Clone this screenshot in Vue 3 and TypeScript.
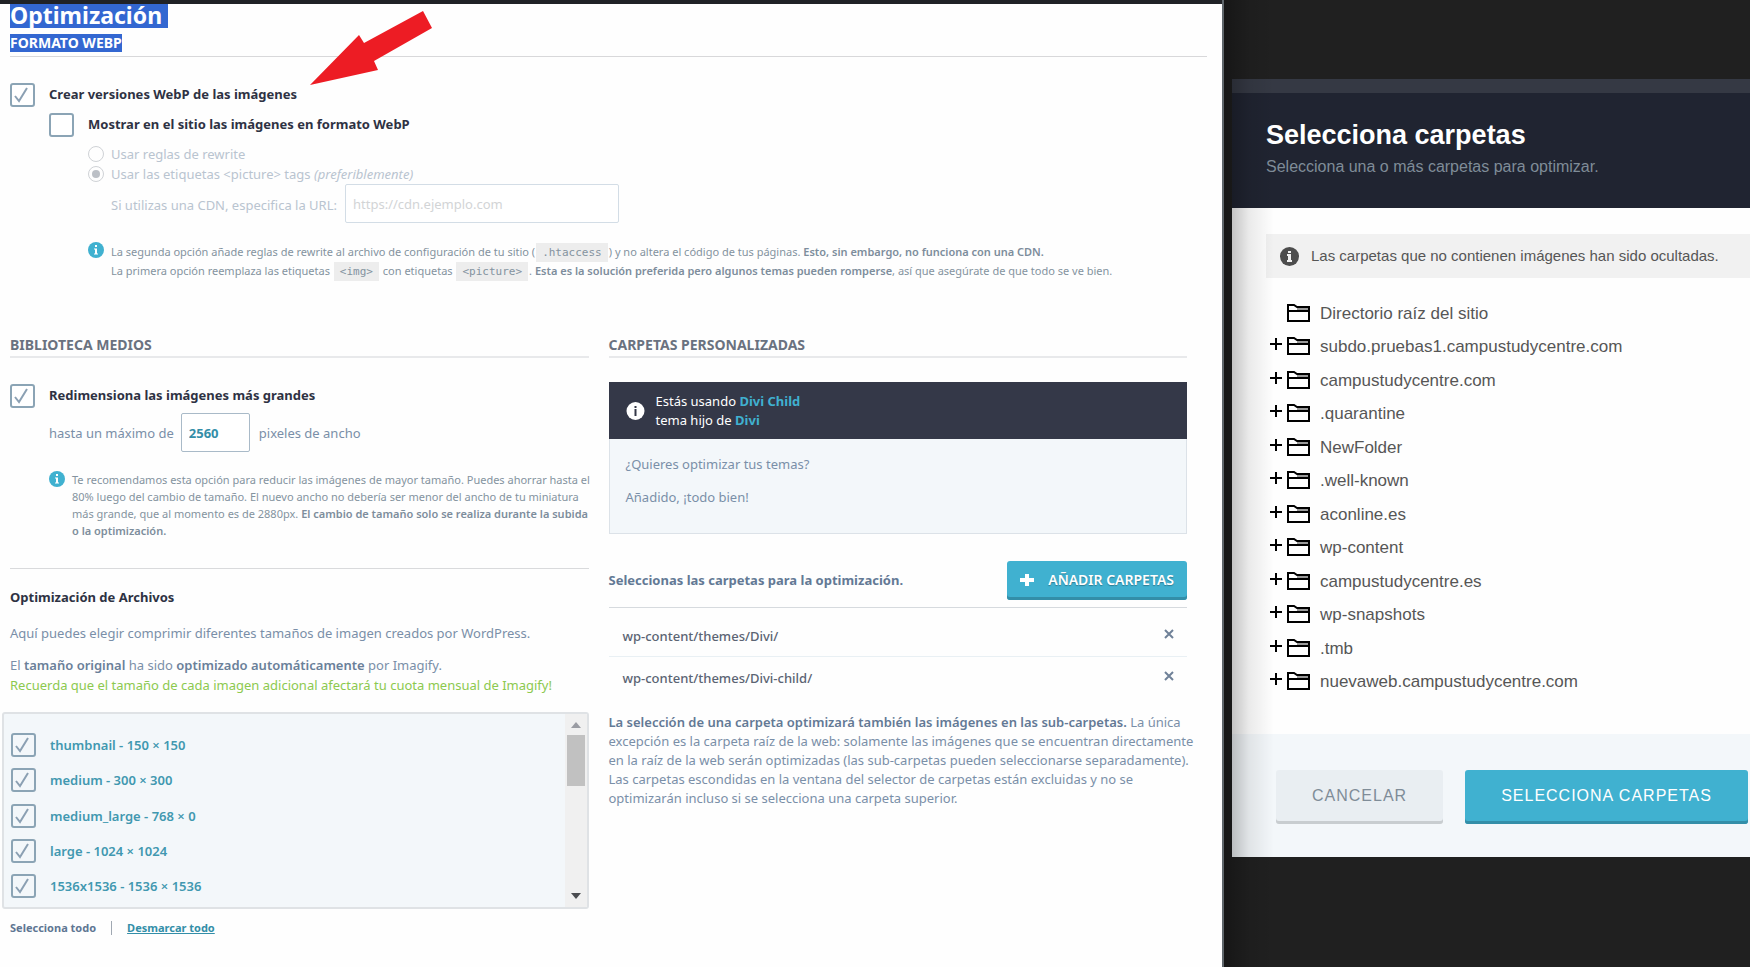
<script setup lang="ts">
import { ref } from 'vue'

interface ImageSize {
  id: string
  label: string
  checked: boolean
}

interface Folder {
  name: string
  expandable: boolean
}

const createWebp = ref(true)
const displayWebp = ref(false)
const method = ref('picture')
const cdnUrl = ref('')
const resize = ref(true)
const maxWidth = ref('2560')

const sizes = ref<ImageSize[]>([
  { id: 'thumbnail', label: 'thumbnail - 150 × 150', checked: true },
  { id: 'medium', label: 'medium - 300 × 300', checked: true },
  { id: 'medium_large', label: 'medium_large - 768 × 0', checked: true },
  { id: 'large', label: 'large - 1024 × 1024', checked: true },
  { id: '1536x1536', label: '1536x1536 - 1536 × 1536', checked: true },
])

const customFolders = ref<string[]>(['wp-content/themes/Divi/', 'wp-content/themes/Divi-child/'])

const folders: Folder[] = [
  { name: 'Directorio raíz del sitio', expandable: false },
  { name: 'subdo.pruebas1.campustudycentre.com', expandable: true },
  { name: 'campustudycentre.com', expandable: true },
  { name: '.quarantine', expandable: true },
  { name: 'NewFolder', expandable: true },
  { name: '.well-known', expandable: true },
  { name: 'aconline.es', expandable: true },
  { name: 'wp-content', expandable: true },
  { name: 'campustudycentre.es', expandable: true },
  { name: 'wp-snapshots', expandable: true },
  { name: '.tmb', expandable: true },
  { name: 'nuevaweb.campustudycentre.com', expandable: true },
]

function setAll(value: boolean) {
  sizes.value.forEach((s) => (s.checked = value))
}

function removeFolder(name: string) {
  customFolders.value = customFolders.value.filter((f) => f !== name)
}
</script>

<template>
  <div class="page">
    <main class="settings">
      <h1><span class="selected">Optimización&nbsp;</span></h1>
      <h2 class="webp-title"><span class="selected">FORMATO WEBP</span></h2>

      <svg class="arrow" viewBox="0 0 124 76" width="124" height="76" aria-hidden="true">
        <path d="M113 0 L122 17 L64 50 L68 59 L0 74 L49 24 L54 32 Z" fill="#ed1c24" />
      </svg>

      <section class="webp">
        <label class="check-row">
          <span class="box">
            <input v-model="createWebp" type="checkbox" />
            <svg viewBox="0 0 25 24"><path d="M5 13 L9 18 L17 5" /></svg>
          </span>
          <span class="strong">Crear versiones WebP de las imágenes</span>
        </label>
        <div class="nested">
          <label class="check-row">
            <span class="box">
              <input v-model="displayWebp" type="checkbox" />
              <svg viewBox="0 0 25 24"><path d="M5 13 L9 18 L17 5" /></svg>
            </span>
            <span class="strong">Mostrar en el sitio las imágenes en formato WebP</span>
          </label>
          <div class="options">
            <div class="radios">
              <label><input v-model="method" type="radio" value="rewrite" disabled /> <span>Usar reglas de rewrite</span></label>
              <label>
                <input v-model="method" type="radio" value="picture" disabled />
                <span>Usar las etiquetas &lt;picture&gt; tags <em>(preferiblemente)</em></span>
              </label>
            </div>
            <div class="cdn">
              <label for="cdn">Si utilizas una CDN, especifica la URL:</label>
              <input id="cdn" v-model="cdnUrl" type="text" placeholder="https://cdn.ejemplo.com" disabled />
            </div>
            <div class="info webp-info">
              <svg viewBox="0 0 16 16" width="16" height="16" aria-hidden="true">
                <circle cx="8" cy="8" r="8" fill="#40b1d0" />
                <path d="M7 3h2v2H7zM6 6.500h3v5h1v1H6v-1h1v-4H6z" fill="#fff" />
              </svg>
              <p>
                La segunda opción añade reglas de rewrite al archivo de configuración de tu sitio (<code>.htaccess</code>)
                y no altera el código de tus páginas. <b>Esto, sin embargo, no funciona con una CDN.</b><br />
                La primera opción reemplaza las etiquetas <code>&lt;img&gt;</code> con etiquetas <code>&lt;picture&gt;</code>.
                <b>Esta es la solución preferida pero algunos temas pueden romperse</b>, así que asegúrate de que todo se ve bien.
              </p>
            </div>
          </div>
        </div>
      </section>

      <div class="columns">
        <section class="library">
          <h2 class="section-title">BIBLIOTECA MEDIOS</h2>
          <label class="check-row">
            <span class="box">
              <input v-model="resize" type="checkbox" />
              <svg viewBox="0 0 25 24"><path d="M5 13 L9 18 L17 5" /></svg>
            </span>
            <span class="strong">Redimensiona las imágenes más grandes</span>
          </label>
          <div class="resize">
            <label for="max-width">hasta un máximo de</label>
            <input id="max-width" v-model="maxWidth" type="text" />
            <span>pixeles de ancho</span>
          </div>
          <div class="info resize-info">
            <svg viewBox="0 0 16 16" width="16" height="16" aria-hidden="true">
              <circle cx="8" cy="8" r="8" fill="#40b1d0" />
              <path d="M7 3h2v2H7zM6 6.500h3v5h1v1H6v-1h1v-4H6z" fill="#fff" />
            </svg>
            <p>
              Te recomendamos esta opción para reducir las imágenes de mayor tamaño. Puedes ahorrar hasta el<br />
              80% luego del cambio de tamaño. El nuevo ancho no debería ser menor del ancho de tu miniatura<br />
              más grande, que al momento es de 2880px. <b>El cambio de tamaño solo se realiza durante la subida<br />
              o la optimización.</b>
            </p>
          </div>

          <h3 class="files-title">Optimización de Archivos</h3>
          <p class="files-intro">Aquí puedes elegir comprimir diferentes tamaños de imagen creados por WordPress.</p>
          <p class="files-note">
            El <b>tamaño original</b> ha sido <b>optimizado automáticamente</b> por Imagify.<br />
            <span class="green">Recuerda que el tamaño de cada imagen adicional afectará tu cuota mensual de Imagify!</span>
          </p>

          <div class="sizes">
            <div class="sizes-list">
              <label v-for="size in sizes" :key="size.id" class="check-row">
                <span class="box">
                  <input v-model="size.checked" type="checkbox" />
                  <svg viewBox="0 0 25 24"><path d="M5 13 L9 18 L17 5" /></svg>
                </span>
                <span class="size-name">{{ size.label }}</span>
              </label>
            </div>
            <div class="scrollbar" aria-hidden="true">
              <svg viewBox="0 0 10 6" width="10" height="6"><path d="M0 6 L5 0 L10 6Z" fill="#9a9ca3" /></svg>
              <span class="thumb"></span>
              <svg class="down" viewBox="0 0 10 6" width="10" height="6"><path d="M0 0 L5 6 L10 0Z" fill="#4a4c50" /></svg>
            </div>
          </div>
          <div class="bulk">
            <button type="button" @click="setAll(true)">Selecciona todo</button>
            <span class="divider"></span>
            <button type="button" class="active" @click="setAll(false)">Desmarcar todo</button>
          </div>
        </section>

        <section class="custom">
          <h2 class="section-title">CARPETAS PERSONALIZADAS</h2>
          <div class="theme">
            <div class="theme-head">
              <svg viewBox="0 0 18 18" width="19" height="18" aria-hidden="true">
                <circle cx="9" cy="9" r="9" fill="#fff" />
                <path d="M8 4h2v2H8zM8 7h2v7H8z" fill="#343848" />
              </svg>
              <p>Estás usando <b>Divi Child</b><br />tema hijo de <b>Divi</b></p>
            </div>
            <div class="theme-body">
              <p>¿Quieres optimizar tus temas?</p>
              <p>Añadido, ¡todo bien!</p>
            </div>
          </div>

          <div class="add-row">
            <strong>Seleccionas las carpetas para la optimización.</strong>
            <button type="button" class="add">
              <svg viewBox="0 0 14 14" width="14" height="14" aria-hidden="true"><path d="M5 1h4v4h5v4H9v4H5V9H0V5h5z" fill="#fff" /></svg>
              AÑADIR CARPETAS
            </button>
          </div>
          <ul class="paths">
            <li v-for="path in customFolders" :key="path">
              <span>{{ path }}</span>
              <button type="button" :aria-label="`Eliminar ${path}`" @click="removeFolder(path)">
                <svg viewBox="0 0 10 10" width="10" height="10"><path d="M1 1 L9 9 M9 1 L1 9" stroke="#6f8198" stroke-width="2" /></svg>
              </button>
            </li>
          </ul>
          <p class="explain">
            <b>La selección de una carpeta optimizará también las imágenes en las sub-carpetas.</b> La única<br />
            excepción es la carpeta raíz de la web: solamente las imágenes que se encuentran directamente<br />
            en la raíz de la web serán optimizadas (las sub-carpetas pueden seleccionarse separadamente).<br />
            Las carpetas escondidas en la ventana del selector de carpetas están excluidas y no se<br />
            optimizarán incluso si se selecciona una carpeta superior.
          </p>
        </section>
      </div>
    </main>

    <aside class="backdrop">
      <div class="modal" role="dialog" aria-labelledby="modal-title">
        <div class="strip"></div>
        <header>
          <h2 id="modal-title">Selecciona carpetas</h2>
          <p>Selecciona una o más carpetas para optimizar.</p>
        </header>
        <div class="modal-body">
          <div class="notice">
            <svg viewBox="0 0 19 19" width="19" height="19" aria-hidden="true">
              <circle cx="9.500" cy="9.500" r="9.500" fill="#4d4d4d" />
              <path d="M8 4h3v2H8zM7 7h4v6h1v2H7v-2h1V9H7z" fill="#f1f1f1" />
            </svg>
            <span>Las carpetas que no contienen imágenes han sido ocultadas.</span>
          </div>
          <ul class="tree">
            <li v-for="folder in folders" :key="folder.name">
              <button type="button">
                <svg class="plus" viewBox="0 0 12 12" width="12" height="12">
                  <path v-if="folder.expandable" d="M0 6H12M6 0V12" stroke="#000" stroke-width="2" />
                </svg>
                <svg class="folder" viewBox="0 0 23 18" width="23" height="18">
                  <path d="M1 17V1H7L10 3H22V17Z M1 7H22" fill="none" stroke="#000" stroke-width="2" />
                  <path d="M10 5H21" stroke="#999" stroke-width="2" />
                </svg>
                <span>{{ folder.name }}</span>
              </button>
            </li>
          </ul>
        </div>
        <footer>
          <button type="button" class="cancel">CANCELAR</button>
          <button type="button" class="confirm">SELECCIONA CARPETAS</button>
        </footer>
      </div>
    </aside>
  </div>
</template>

<style>
body {
  margin: 0;
  background: #202020;
}
</style>

<style scoped>
* {
  box-sizing: border-box;
}
h1, h2, h3, p, ul {
  margin: 0;
  padding: 0;
}
ul {
  list-style: none;
}
button, input {
  font: inherit;
}
button {
  cursor: pointer;
}
.page {
  display: grid;
  grid-template-columns: 1222fr 528fr;
  min-height: 100vh;
  overflow: hidden;
}
.settings {
  position: relative;
  min-width: 0;
  padding: 0 15px 0 10px;
  border-top: 4px solid #202226;
  background: #fefefe;
  color: #7a8fa8;
  font: 13px/20px "Noto Sans", "Open Sans", sans-serif;
  white-space: nowrap;
}
.settings b {
  font-weight: 600;
}
.selected {
  display: block;
  width: fit-content;
  background: #3367d1;
  color: #fff;
}
h1 {
  font-size: 23px;
  line-height: 22px;
}
h1 .selected {
  padding-bottom: 2px;
}
.webp-title {
  margin-top: 6px;
  padding-bottom: 4px;
  border-bottom: 1px solid #d8d8da;
  font-size: 14px;
  line-height: 18px;
}
.arrow {
  position: absolute;
  left: 310px;
  top: 7px;
}
.webp {
  margin-top: 26px;
}
.check-row {
  display: flex;
  align-items: center;
  gap: 14px;
  width: fit-content;
}
.box {
  display: grid;
  width: 25px;
  height: 24px;
}
.box > * {
  grid-area: 1 / 1;
}
.box input {
  appearance: none;
  width: 25px;
  height: 24px;
  margin: 0;
  border: 2px solid #8ba4b5;
  border-radius: 3px;
  background: #fff;
}
.box svg {
  width: 25px;
  height: 24px;
  fill: none;
  stroke: #8ba0b3;
  stroke-width: 2;
  pointer-events: none;
  visibility: hidden;
}
.box input:checked + svg {
  visibility: visible;
}
.strong {
  padding-bottom: 2px;
  color: #2e3243;
  font-weight: 700;
}
.nested {
  margin: 6px 0 0 39px;
}
.options {
  margin: 7px 0 0 39px;
}
.radios label {
  display: flex;
  align-items: center;
  gap: 7px;
  height: 20px;
  color: #b9c4d0;
}
.radios input {
  appearance: none;
  display: grid;
  place-items: center;
  width: 16px;
  height: 16px;
  margin: 0;
  border: 1px solid #cfd2d6;
  border-radius: 50%;
}
.radios input:checked::before {
  content: "";
  width: 8px;
  height: 8px;
  border-radius: 50%;
  background: #bcc0c6;
}
.cdn {
  display: flex;
  align-items: center;
  gap: 8px;
  padding-left: 23px;
  color: #b9c4d0;
}
.cdn label {
  padding-top: 2px;
}
.cdn input {
  width: 274px;
  height: 39px;
  padding: 0 7px;
  border: 1px solid #d3dde6;
  border-radius: 2px;
  background: #fff;
}
.cdn input::placeholder {
  color: #d2d4d6;
  opacity: 1;
}
.info {
  display: flex;
  gap: 7px;
  color: #84939f;
  font-size: 11px;
}
.info svg {
  flex: none;
}
.info b {
  color: #7d8d9c;
}
.webp-info {
  margin-top: 19px;
  line-height: 19px;
}
.info code {
  margin: 0 1px;
  padding: 3px 6px;
  background: #ededed;
  font: 11px/12px "DejaVu Sans Mono", monospace;
}
.columns {
  display: grid;
  grid-template-columns: 1fr 1fr;
  gap: 20px;
  margin: 56px 20px 0 0;
}
.columns > * {
  min-width: 0;
}
.section-title {
  margin-bottom: 26px;
  padding-bottom: 2px;
  border-bottom: 2px solid #e8e9eb;
  color: #6a7280;
  font-size: 14px;
  line-height: 18px;
}
.resize {
  display: flex;
  align-items: center;
  margin: 5px 0 0 39px;
}
.resize input {
  width: 69px;
  height: 39px;
  margin: 0 9px 0 7px;
  padding: 0 7px;
  border: 1px solid #a9bac8;
  border-radius: 2px;
  background: #fff;
  color: #338ea8;
  font-weight: 700;
}
.resize-info {
  margin: 19px 0 0 39px;
  line-height: 17px;
}
.files-title {
  margin-top: 29px;
  padding-top: 18px;
  border-top: 1px solid #d9dadc;
  color: #2e3243;
  font-size: 13px;
}
.files-intro {
  margin-top: 16px;
}
.files-note {
  margin-top: 12px;
}
.files-note b {
  color: #6a8099;
}
.green {
  color: #8cc94f;
}
.sizes {
  display: flex;
  height: 197px;
  margin: 17px 0 0 -8px;
  border: 2px solid #dfe2e5;
  border-radius: 3px;
  background: #f3f7fa;
  overflow: hidden;
}
.sizes-list {
  flex: 1;
  display: grid;
  align-content: space-between;
  padding: 19px 0 9px 7px;
}
.size-name {
  color: #4198b0;
  font-weight: 600;
}
.sizes .box input {
  background: #f3f7fa;
}
.scrollbar {
  display: flex;
  flex-direction: column;
  align-items: center;
  gap: 7px;
  width: 22px;
  padding: 8px 0;
  background: #f0f0f0;
}
.thumb {
  width: 18px;
  height: 51px;
  background: #c1c1c1;
}
.scrollbar .down {
  margin-top: auto;
}
.bulk {
  display: flex;
  align-items: center;
  gap: 15px;
  margin-top: 9px;
}
.bulk button {
  padding: 0;
  border: 0;
  background: none;
  color: #5f7693;
  font-size: 11px;
  font-weight: 700;
}
.bulk .active {
  color: #338ea8;
  text-decoration: underline;
}
.divider {
  width: 1px;
  height: 14px;
  background: #a0a8b2;
}
.custom .section-title {
  margin-bottom: 24px;
}
.theme-head {
  display: flex;
  align-items: center;
  gap: 11px;
  padding: 10px 17px 9px;
  background: #343848;
  color: #fff;
  line-height: 19px;
}
.theme-head b {
  color: #40b1d0;
  font-weight: 700;
}
.theme-body {
  display: grid;
  gap: 13px;
  padding: 15px 16px 26px;
  border: 1px solid #dce2e8;
  border-top: 0;
  background: #f3f7fa;
}
.add-row {
  display: flex;
  align-items: center;
  justify-content: space-between;
  margin-top: 27px;
  padding-bottom: 7px;
  border-bottom: 1px solid #d6dade;
  color: #637995;
}
.add-row strong {
  padding-bottom: 2px;
}
.add {
  display: flex;
  align-items: center;
  gap: 14px;
  height: 39px;
  padding: 0 13px 2px;
  border: 0;
  border-radius: 3px;
  background: #40b1d0;
  box-shadow: inset 0 -3px 0 #338ea8;
  color: #fff;
  font-size: 14px;
  font-weight: 600;
  text-shadow: 0 1px 1px #2c7d94;
}
.paths {
  padding-top: 7px;
}
.paths li {
  display: flex;
  align-items: center;
  justify-content: space-between;
  padding: 11px 13px 10px 14px;
  color: #5b6473;
  font-weight: 500;
}
.paths li + li {
  border-top: 1px solid #e9f0f4;
}
.paths button {
  display: flex;
  padding: 0 0 5px;
  border: 0;
  background: none;
}
.explain {
  margin-top: 15px;
  line-height: 19px;
}
.explain b {
  color: #637995;
}
.backdrop {
  position: relative;
  min-width: 0;
  padding: 79px 0 0 8px;
  border-left: 2px solid #5f666b;
  background: #202020;
  font: 16px/22px "Liberation Sans", Arial, sans-serif;
  white-space: nowrap;
}
/* Shade that the left window casts on the dialog. */
.backdrop::after {
  content: "";
  position: absolute;
  inset: 0 auto 0 0;
  width: 50px;
  background: linear-gradient(90deg, rgba(0, 0, 0, 0.3), rgba(0, 0, 0, 0.08) 50%, transparent);
  pointer-events: none;
}
.modal {
  background: #fefefe;
  color: #565656;
}
.strip {
  height: 14px;
  background: #353944;
}
.modal header {
  padding: 27px 34px 30px;
  background: #202431;
  color: #7f8c98;
}
.modal header h2 {
  margin-bottom: 6px;
  color: #fff;
  font-size: 27px;
  line-height: 30px;
}
.modal-body {
  padding: 26px 0 36px 34px;
}
.notice {
  display: flex;
  align-items: center;
  gap: 12px;
  height: 44px;
  padding-left: 14px;
  background: #f1f1f1;
  font-size: 15px;
}
.tree {
  display: grid;
  grid-auto-rows: 1fr;
  height: 402px;
  margin-top: 18px;
  font-size: 17px;
}
.tree li {
  display: flex;
  align-items: center;
}
.tree button {
  display: flex;
  align-items: center;
  padding: 2px 0 0 4px;
  border: 0;
  background: none;
  color: inherit;
}
.plus {
  margin: 0 5px 6px 0;
}
.folder {
  margin: 0 10px 2px 0;
}
.modal footer {
  display: flex;
  gap: 22px;
  padding: 36px 0 33px 44px;
  background: #f3f7fa;
}
.modal footer button {
  height: 54px;
  padding: 0 36px 3px;
  border: 0;
  border-radius: 3px;
  letter-spacing: 1px;
}
.cancel {
  background: #e9eef2;
  box-shadow: inset 0 -3px 0 #c8cdd0;
  color: #7f8c98;
}
.confirm {
  background: #40b1d0;
  box-shadow: inset 0 -3px 0 #338ea8;
  color: #fff;
}
</style>
